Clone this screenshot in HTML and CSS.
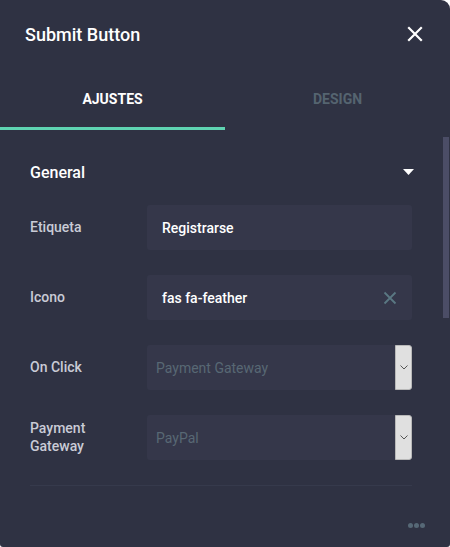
FILE: index.html
```
<!DOCTYPE html>
<html>
<head>
<meta charset="utf-8">
<link rel="stylesheet" href="styles.css">
</head>
<body>
<div class="panel">
  <div class="header">
    <div class="title">Submit Button</div>
    <svg class="close" width="16" height="16" viewBox="0 0 16 16"><path d="M2 2 L14 14 M14 2 L2 14" stroke="#fff" stroke-width="2.2" stroke-linecap="square"/></svg>
  </div>
  <div class="tabs">
    <div class="tab active">AJUSTES</div>
    <div class="tab">DESIGN</div>
  </div>
  <div class="content">
    <div class="section-head">
      <span class="section-title">General</span>
      <svg class="caret" width="11" height="6" viewBox="0 0 11 6"><path d="M0 0 H11 L5.5 6 Z" fill="#fff"/></svg>
    </div>
    <div class="row">
      <div class="label">Etiqueta</div>
      <div class="field"><span class="value">Registrarse</span></div>
    </div>
    <div class="row">
      <div class="label">Icono</div>
      <div class="field"><span class="value">fas fa-feather</span>
        <svg class="clear" width="14" height="14" viewBox="0 0 14 14"><path d="M1.5 1.5 L12.5 12.5 M12.5 1.5 L1.5 12.5" stroke="#5a7883" stroke-width="1.8"/></svg>
      </div>
    </div>
    <div class="row">
      <div class="label">On Click</div>
      <div class="field select"><span class="placeholder">Payment Gateway</span>
        <div class="arrow"><svg width="8" height="5" viewBox="0 0 8 5"><path d="M0.5 0.5 L4 4 L7.5 0.5" stroke="#555" stroke-width="1" fill="none"/></svg></div>
      </div>
    </div>
    <div class="row">
      <div class="label">Payment<br>Gateway</div>
      <div class="field select"><span class="placeholder">PayPal</span>
        <div class="arrow"><svg width="8" height="5" viewBox="0 0 8 5"><path d="M0.5 0.5 L4 4 L7.5 0.5" stroke="#555" stroke-width="1" fill="none"/></svg></div>
      </div>
    </div>
    <div class="divider"></div>
    <div class="footer">
      <span class="dot"></span><span class="dot"></span><span class="dot"></span>
    </div>
  </div>
  <div class="scrollbar"></div>
</div>
</body>
</html>
```
FILE: styles.css
```
html, body {
  margin: 0;
  padding: 0;
  background: #ffffff;
}
body {
  font-family: Roboto, "Liberation Sans", sans-serif;
}
.panel {
  position: relative;
  width: 450px;
  height: 547px;
  background: #2f3243;
  border-radius: 0 9px 3px 3px;
  overflow: hidden;
  box-sizing: border-box;
}
.header {
  height: 68px;
  padding: 0 27px 0 25px;
  display: flex;
  align-items: center;
  justify-content: space-between;
}
.title {
  color: #ffffff;
  font-size: 18px;
  font-weight: 500;
}
.close {
  display: block;
}
.tabs {
  display: flex;
  height: 62px;
}
.tab {
  flex: 1;
  display: flex;
  align-items: center;
  justify-content: center;
  padding-top: 3px;
  font-size: 14px;
  font-weight: 700;
  color: #556470;
  box-sizing: border-box;
  border-bottom: 3px solid transparent;
}
.tab.active {
  color: #ffffff;
  border-bottom-color: #5fd4b2;
}
.content {
  padding: 20px 38px 0 30px;
}
.section-head {
  height: 44px;
  display: flex;
  align-items: center;
  justify-content: space-between;
  margin-bottom: 11px;
}
.section-title {
  color: #ffffff;
  font-size: 16px;
  font-weight: 500;
}
.caret {
  display: block;
  margin-right: -2px;
}
.row {
  display: flex;
  align-items: center;
  height: 45px;
  margin-bottom: 25px;
}
.label {
  width: 117px;
  flex-shrink: 0;
  color: #c9cbd6;
  font-size: 14px;
  font-weight: 500;
  line-height: 18px;
  margin-top: -1px;
}
.field {
  flex: 1;
  height: 45px;
  background: #35374a;
  border-radius: 3px;
  display: flex;
  align-items: center;
  padding-left: 15px;
  padding-right: 15px;
  box-sizing: border-box;
  justify-content: space-between;
}
.field.select {
  padding-left: 9px;
  padding-right: 0;
}
.value {
  color: #ffffff;
  font-size: 14px;
  font-weight: 500;
}
.placeholder {
  color: #586874;
  font-size: 14px;
  font-weight: 400;
}
.clear {
  display: block;
}
.arrow {
  width: 17px;
  height: 45px;
  box-sizing: border-box;
  background: #e0e0e0;
  border: 1px solid #b8b8b8;
  border-radius: 0 3px 3px 0;
  display: flex;
  align-items: center;
  justify-content: center;
}
.arrow svg {
  display: block;
}
.divider {
  height: 1px;
  background: #363a4c;
}
.footer {
  display: flex;
  justify-content: flex-end;
  gap: 1px;
  padding-top: 37px;
  margin-right: -13px;
}
.dot {
  width: 5px;
  height: 5px;
  border-radius: 50%;
  background: #566876;
}
.scrollbar {
  position: absolute;
  left: 443px;
  top: 137px;
  width: 6px;
  height: 181px;
  background: #4b4d66;
}
```
